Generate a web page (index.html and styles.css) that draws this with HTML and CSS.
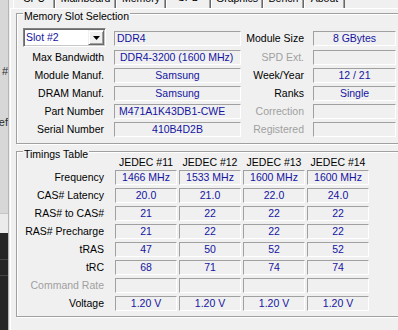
FILE: index.html
```html
<!DOCTYPE html>
<html>
<head>
<meta charset="utf-8">
<title>CPU-Z SPD</title>
<link rel="stylesheet" href="styles.css">
</head>
<body>
<div class="screen">
  <div class="behind">
    <div class="behind-top">
      <span class="frag frag-hash">#</span>
      <span class="frag frag-ef">ef</span>
    </div>
    <div class="behind-mid"></div>
    <div class="behind-dark">
      <div class="dark-line"></div>
      <div class="dark-line second"></div>
    </div>
  </div>
  <div class="window">
    <div class="tabs">
      <div class="tab w-cpu">CPU</div>
      <div class="tab w-main">Mainboard</div>
      <div class="tab w-mem">Memory</div>
      <div class="tab w-spd active">SPD</div>
      <div class="tab w-gfx">Graphics</div>
      <div class="tab w-bench">Bench</div>
      <div class="tab w-about">About</div>
    </div>
    <div class="panel">
      <div class="group slot-group">
        <div class="group-title">Memory Slot Selection</div>
        <div class="slot-grid">
          <div class="combo"><span class="combo-text">Slot #2</span><span class="combo-btn"><svg width="7" height="4" viewBox="0 0 7 4"><path d="M0 0h7L3.5 4z" fill="#000"/></svg></span></div>
          <div class="fld r1 pl2">DDR4</div>
          <div class="lbl rl r1">Module Size</div>
          <div class="fld r1 c">8 GBytes</div>

          <div class="lbl">Max Bandwidth</div>
          <div class="fld pl5">DDR4-3200 (1600 MHz)</div>
          <div class="lbl rl dis">SPD Ext.</div>
          <div class="fld"></div>

          <div class="lbl">Module Manuf.</div>
          <div class="fld c">Samsung</div>
          <div class="lbl rl">Week/Year</div>
          <div class="fld c">12 / 21</div>

          <div class="lbl">DRAM Manuf.</div>
          <div class="fld c">Samsung</div>
          <div class="lbl rl">Ranks</div>
          <div class="fld c">Single</div>

          <div class="lbl">Part Number</div>
          <div class="fld pl4">M471A1K43DB1-CWE</div>
          <div class="lbl rl dis">Correction</div>
          <div class="fld"></div>

          <div class="lbl">Serial Number</div>
          <div class="fld c">410B4D2B</div>
          <div class="lbl rl dis">Registered</div>
          <div class="fld"></div>
        </div>
      </div>

      <div class="group tim-group">
        <div class="group-title">Timings Table</div>
        <div class="tim-head">
          <div></div>
          <div class="th">JEDEC #11</div>
          <div class="th">JEDEC #12</div>
          <div class="th">JEDEC #13</div>
          <div class="th">JEDEC #14</div>
        </div>
        <div class="tim-grid">
          <div class="lbl tl">Frequency</div>
          <div class="fld c">1466 MHz</div>
          <div class="fld c">1533 MHz</div>
          <div class="fld c">1600 MHz</div>
          <div class="fld c">1600 MHz</div>

          <div class="lbl tl">CAS# Latency</div>
          <div class="fld c">20.0</div>
          <div class="fld c">21.0</div>
          <div class="fld c">22.0</div>
          <div class="fld c">24.0</div>

          <div class="lbl tl">RAS# to CAS#</div>
          <div class="fld c">21</div>
          <div class="fld c">22</div>
          <div class="fld c">22</div>
          <div class="fld c">22</div>

          <div class="lbl tl">RAS# Precharge</div>
          <div class="fld c">21</div>
          <div class="fld c">22</div>
          <div class="fld c">22</div>
          <div class="fld c">22</div>

          <div class="lbl tl">tRAS</div>
          <div class="fld c">47</div>
          <div class="fld c">50</div>
          <div class="fld c">52</div>
          <div class="fld c">52</div>

          <div class="lbl tl">tRC</div>
          <div class="fld c">68</div>
          <div class="fld c">71</div>
          <div class="fld c">74</div>
          <div class="fld c">74</div>

          <div class="lbl tl dis">Command Rate</div>
          <div class="fld c"></div>
          <div class="fld c"></div>
          <div class="fld c"></div>
          <div class="fld c"></div>

          <div class="lbl tl">Voltage</div>
          <div class="fld c">1.20 V</div>
          <div class="fld c">1.20 V</div>
          <div class="fld c">1.20 V</div>
          <div class="fld c">1.20 V</div>
        </div>
      </div>
    </div>
  </div>
</div>
</body>
</html>
```

FILE: styles.css
```css
* { box-sizing: border-box; }
html, body { margin: 0; padding: 0; }
body {
  width: 398px;
  height: 330px;
  overflow: hidden;
  background: #f0f0f0;
  font-family: "Liberation Sans", Arial, sans-serif;
  font-size: 10.5px;
  color: #000;
}
.screen {
  display: flex;
  width: 398px;
  height: 330px;
  overflow: hidden;
}

/* window behind, at the left edge */
.behind {
  flex: 0 0 9px;
  display: flex;
  flex-direction: column;
  border-right: 1px solid #b4b4b4;
  background: #d7d7d7;
  overflow: hidden;
}
.behind-top {
  height: 213px;
  padding-top: 65px;
  display: flex;
  flex-direction: column;
}
.frag {
  display: flex;
  justify-content: flex-end;
  white-space: nowrap;
  line-height: 13px;
  font-size: 11px;
  color: #2a2a2a;
}
.frag-ef { margin-top: 38px; }
.behind-mid {
  height: 20px;
  background: #ebebeb;
  border-top: 1px solid #c6c6c6;
}
.behind-dark {
  flex: 1;
  background: #262626;
  padding-top: 26px;
}
.dark-line { height: 1px; background: #454545; }
.dark-line.second { margin-top: 15px; }

/* CPU-Z window */
.window {
  flex: 0 0 400px;
  display: flex;
  flex-direction: column;
  background: #f0f0f0;
}
.tabs {
  display: flex;
  height: 20px;
  margin-top: -12px;
  padding-left: 4px;
}
.tab {
  height: 20px;
  padding-top: 4px;
  line-height: 13px;
  text-align: center;
  white-space: nowrap;
  background: #f0f0f0;
  border-left: 1px solid #fff;
  border-right: 1px solid #696969;
  box-shadow: inset -1px 0 0 #a0a0a0;
}
.tab.active { padding-top: 3px; }
.w-cpu { width: 42px; }
.w-main { width: 61px; }
.w-mem { width: 50px; }
.w-spd { width: 45px; }
.w-gfx { width: 52px; }
.w-bench { width: 41px; }
.w-about { width: 41px; }

.panel {
  flex: 1;
  margin-left: 1px;
  border-left: 1px solid #fff;
  border-top: 1px solid #fff;
  padding: 4px 0 0 5px;
}

/* group boxes */
.group {
  border: 1px solid #a0a0a0;
  box-shadow: inset 1px 1px 0 #fff, 1px 1px 0 #fff;
}
.group-title {
  width: fit-content;
  margin: -2px 0 0 6px;
  padding: 0 1px;
  background: #f0f0f0;
  line-height: 9px;
  white-space: nowrap;
}
.slot-group { padding-bottom: 6px; }
.tim-group { margin-top: 7px; padding-bottom: 5px; }

.slot-grid {
  display: grid;
  grid-template-columns: 97px 127px 72px 83px;
  grid-template-rows: 19px repeat(5, 15px);
  row-gap: 3px;
  margin-top: 7px;
}

.lbl {
  text-align: right;
  padding-right: 10px;
  line-height: 15px;
  height: 15px;
  white-space: nowrap;
  color: #000;
}
.lbl.rl { padding-right: 9px; }
.lbl.tl { padding-right: 9px; }
.lbl.dis { color: #a0a0a0; }

.fld {
  height: 15px;
  line-height: 13px;
  border: 1px solid;
  border-color: #a0a0a0 #fff #fff #a0a0a0;
  color: #1414a0;
  white-space: nowrap;
  overflow: hidden;
}
.r1 { margin-top: 3px; }
.c { text-align: center; }
.pl2 { padding-left: 2px; }
.pl4 { padding-left: 4px; }
.pl5 { padding-left: 5px; }

.combo {
  margin-left: 6px;
  width: 83px;
  height: 19px;
  display: flex;
  align-items: center;
  padding: 1px 1px 1px 2px;
  background: #fff;
  border: 1px solid;
  border-color: #828282 #fff #fff #828282;
  box-shadow: inset 1px 1px 0 #696969, inset -1px -1px 0 #c8c8c8;
}
.combo-text {
  flex: 1;
  line-height: 13px;
  color: #1414a0;
  white-space: nowrap;
}
.combo-btn {
  width: 16px;
  height: 15px;
  display: flex;
  align-items: center;
  justify-content: center;
  background: #f0f0f0;
  border: 1px solid;
  border-color: #f0f0f0 #696969 #696969 #f0f0f0;
  box-shadow: inset 1px 1px 0 #fff, inset -1px -1px 0 #a0a0a0;
}
.combo-btn svg { display: block; }

.tim-head {
  display: grid;
  grid-template-columns: 96px repeat(4, 62px);
  column-gap: 2px;
  height: 15px;
  padding-top: 1px;
  line-height: 13px;
  margin-top: -4px;
}
.th { text-align: center; white-space: nowrap; }
.tim-grid {
  display: grid;
  grid-template-columns: 96px repeat(4, 62px);
  column-gap: 2px;
  grid-auto-rows: 15px;
  row-gap: 3px;
}
```
